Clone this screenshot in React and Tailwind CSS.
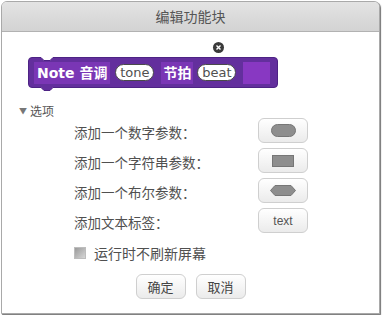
import React from 'react';

const cjk = { fontFamily: '"Noto Sans CJK SC", "Noto Sans", sans-serif' };
const blockFont = { fontFamily: '"DejaVu Sans", "Noto Sans CJK SC", sans-serif' };

const ArgButton = ({ children }) => (
  <button
    type="button"
    className="w-[50px] h-[25px] flex items-center justify-center rounded-[6px] border border-[#cfcfcf] bg-gradient-to-b from-white to-[#ebebeb]"
  >
    {children}
  </button>
);

const Pill = ({ label }) => (
  <div className="h-[17px] w-[39px] flex items-center justify-center rounded-full bg-white border border-[#4a4a4a] text-[13px] leading-none text-[#505050]">
    {label}
  </div>
);

const BlockShape = () => (
  <svg className="absolute left-0 top-0" width="250" height="35" viewBox="0 0 250 35">
    <path
      d="M0.5,4 Q0.5,0.5 4,0.5 L13,0.5 L16,3.5 L22,3.5 L25,0.5 L246,0.5 Q249.5,0.5 249.5,4 L249.5,27 Q249.5,30.5 246,30.5 L25,30.5 L22,33.5 L16,33.5 L13,30.5 L4,30.5 Q0.5,30.5 0.5,27 Z"
      fill="#632f9d"
      stroke="#4d2384"
      strokeWidth="1"
    />
  </svg>
);

const rows = [
  {
    label: '添加一个数字参数：',
    icon: <div className="w-[25px] h-[13px] rounded-full bg-[#8e8e8e] border border-[#767676]" />,
  },
  {
    label: '添加一个字符串参数：',
    icon: <div className="w-[22px] h-[12px] bg-[#8e8e8e] border border-[#767676]" />,
  },
  {
    label: '添加一个布尔参数：',
    icon: (
      <svg width="26" height="11" viewBox="0 0 26 11">
        <polygon points="0.5,5.5 5,0.5 21,0.5 25.5,5.5 21,10.5 5,10.5" fill="#8e8e8e" stroke="#767676" />
      </svg>
    ),
  },
  {
    label: '添加文本标签：',
    icon: (
      <span className="text-[12px] text-[#555]" style={{ fontFamily: '"Liberation Sans", sans-serif' }}>
        text
      </span>
    ),
  },
];

const App = () => {
  return (
    <div className="w-[382px] h-[315px] bg-white pl-px pt-px" style={cjk}>
      <div className="w-[379px] h-[313px] flex flex-col border border-[#a9a9a9] rounded-t-[6px] shadow-[1px_1px_1px_rgba(0,0,0,0.55)] bg-white overflow-hidden">
        <div className="h-[30px] shrink-0 flex items-center justify-center bg-gradient-to-b from-[#e3e3e3] to-[#d3d3d3] border-b border-[#b2b2b2] text-[14px] text-[#555]">
          编辑功能块
        </div>

        <div className="relative h-[59px] shrink-0 pt-[25px] pl-[26px]">
          <div className="absolute left-[211px] top-[10px] w-[11px] h-[11px] rounded-full bg-[#3a3a3a] flex items-center justify-center">
            <svg width="5" height="5" viewBox="0 0 5 5">
              <path d="M0.5,0.5 L4.5,4.5 M4.5,0.5 L0.5,4.5" stroke="#fff" strokeWidth="1.4" />
            </svg>
          </div>
          <div className="relative w-[250px] h-[35px]">
            <BlockShape />
            <div className="relative flex items-center h-[31px] pl-[6px]" style={blockFont}>
              <div className="h-[22px] px-[3px] flex items-center bg-[#7a36b5] text-white font-bold text-[14px] leading-none whitespace-nowrap">
                Note 音调
              </div>
              <div className="ml-[5px]">
                <Pill label="tone" />
              </div>
              <div className="ml-[7px] h-[22px] px-[2px] flex items-center bg-[#7a36b5] text-white font-bold text-[14px] leading-none">
                节拍
              </div>
              <div className="ml-[4px]">
                <Pill label="beat" />
              </div>
              <div className="ml-[7px] w-[27px] h-[22px] bg-[#8838c2]" />
            </div>
          </div>
        </div>

        <div className="mt-[13px] h-[14px] flex items-center pl-[17px] text-[12px] text-[#555]">
          <span className="text-[8px] text-[#777] mr-[3px]">▼</span>
          选项
        </div>

        <div className="flex flex-col gap-[5px]">
          {rows.map((row) => (
            <div key={row.label} className="h-[25px] flex items-center pl-[72px]">
              <div className="w-[184px] text-[13.5px] text-[#505050] pt-[3px]">{row.label}</div>
              <ArgButton>{row.icon}</ArgButton>
            </div>
          ))}
        </div>

        <div className="mt-[13px] h-[14px] flex items-center pl-[72px]">
          <div className="w-[12px] h-[12px] bg-gradient-to-br from-[#9a9a9a] to-[#d6d6d6] border border-[#bdbdbd]" />
          <span className="ml-[8px] text-[14px] text-[#505050]">运行时不刷新屏幕</span>
        </div>

        <div className="mt-[14px] flex justify-center gap-[10px]">
          <button
            type="button"
            className="w-[50px] h-[25px] rounded-[6px] border border-[#cfcfcf] bg-gradient-to-b from-white to-[#ebebeb] text-[13px] text-[#444]"
          >
            确定
          </button>
          <button
            type="button"
            className="w-[50px] h-[25px] rounded-[6px] border border-[#cfcfcf] bg-gradient-to-b from-white to-[#ebebeb] text-[13px] text-[#444]"
          >
            取消
          </button>
        </div>
      </div>
    </div>
  );
};

export default App;
